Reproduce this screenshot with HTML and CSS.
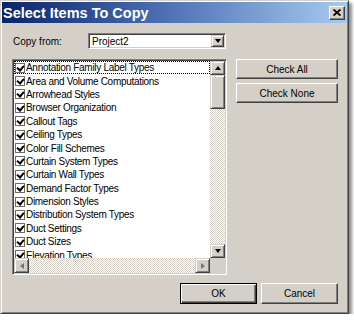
FILE: index.html
```html
<!DOCTYPE html>
<html>
<head>
<meta charset="UTF-8">
<title>Select Items To Copy</title>
<link rel="stylesheet" href="styles.css">
</head>
<body>
<div class="window">
  <div class="titlebar">
    <span class="title">Select Items To Copy</span>
    <span class="close"><svg width="8" height="7" viewBox="0 0 8 7"><path d="M0.5 0.5l7 6M7.5 0.5l-7 6" stroke="#000" stroke-width="1.8"/></svg></span>
  </div>
  <div class="content">
    <div class="source-row">
      <label class="source-label">Copy from:</label>
      <div class="combo">
        <span class="combo-value">Project2</span>
        <span class="sbtn combo-btn"><span class="tri tri-down"></span></span>
      </div>
    </div>
    <div class="main-row">
      <div class="listbox">
        <ul class="items">
          <li class="focused"><span class="check"></span>Annotation Family Label Types</li>
          <li><span class="check"></span>Area and Volume Computations</li>
          <li><span class="check"></span>Arrowhead Styles</li>
          <li><span class="check"></span>Browser Organization</li>
          <li><span class="check"></span>Callout Tags</li>
          <li><span class="check"></span>Ceiling Types</li>
          <li><span class="check"></span>Color Fill Schemes</li>
          <li><span class="check"></span>Curtain System Types</li>
          <li><span class="check"></span>Curtain Wall Types</li>
          <li><span class="check"></span>Demand Factor Types</li>
          <li><span class="check"></span>Dimension Styles</li>
          <li><span class="check"></span>Distribution System Types</li>
          <li><span class="check"></span>Duct Settings</li>
          <li><span class="check"></span>Duct Sizes</li>
          <li><span class="check"></span>Elevation Types</li>
        </ul>
        <div class="vscroll">
          <span class="sbtn"><span class="tri tri-up"></span></span>
          <span class="sbtn thumb"></span>
          <span class="track"></span>
          <span class="sbtn"><span class="tri tri-down"></span></span>
        </div>
        <div class="hscroll">
          <span class="sbtn"><span class="tri tri-left"></span></span>
          <span class="track"></span>
          <span class="sbtn"><span class="tri tri-right"></span></span>
        </div>
        <div class="corner"></div>
      </div>
      <div class="side-buttons">
        <button class="button">Check All</button>
        <button class="button">Check None</button>
      </div>
    </div>
    <div class="footer">
      <button class="button button-default">OK</button>
      <button class="button">Cancel</button>
    </div>
  </div>
</div>
</body>
</html>
```

FILE: styles.css
```css
*{box-sizing:border-box;}
body{margin:0;background:#fff;font-family:"Liberation Sans",Arial,sans-serif;font-size:10px;color:#000;}

.window{width:349px;height:314px;background:#d4d0c8;padding:1px;border:1px solid;border-color:#d4d0c8 #404040 #404040 #d4d0c8;box-shadow:inset 1px 1px #fff,inset -1px -1px #808080,3px 3px 3px rgba(0,0,0,.45);display:flex;flex-direction:column;}

.titlebar{height:21px;display:flex;align-items:center;justify-content:space-between;padding:0 2px 0 1px;background:linear-gradient(90deg,#0a246a 0%,#4a6db2 45%,#a6caf0 100%);}
.title{color:#fff;font-weight:bold;font-size:14.5px;}
.close{width:16px;height:14px;display:flex;align-items:center;justify-content:center;background:#d4d0c8;border:1px solid;border-color:#fff #404040 #404040 #fff;box-shadow:inset -1px -1px #808080;}

.content{padding:0 9px 0 10px;}
.source-row{display:flex;align-items:center;margin-top:10px;height:16px;}
.source-label{width:76px;padding-left:1px;}
.combo{width:138px;height:16px;display:flex;background:#fff;border:1px solid;border-color:#808080 #fff #fff #808080;box-shadow:inset 1px 1px #404040,inset -1px -1px #d4d0c8;padding:2px;}
.combo-value{flex:1;padding-left:1px;line-height:11px;}
.combo-btn{width:13px;margin:-1px -1px -1px 0;}

.main-row{display:flex;gap:9px;margin-top:10px;}
.listbox{width:215px;height:216px;background:#fff;border:1px solid;border-color:#808080 #fff #fff #808080;box-shadow:inset 1px 1px #404040,inset -1px -1px #d4d0c8;padding:1px;display:grid;grid-template-columns:1fr 15px;grid-template-rows:1fr 15px;}
.items{list-style:none;margin:0;padding:0;overflow:hidden;}
.items li{height:13.4px;display:flex;align-items:center;gap:1px;padding-left:1px;white-space:nowrap;letter-spacing:-0.3px;}
.items li.focused{outline:1px dotted #000;outline-offset:-1px;}
.check{width:10px;height:10px;flex:none;background:#fff;border:1px solid #6a6a6a;position:relative;}
.check::after{content:"";position:absolute;left:2px;top:0;width:3px;height:5px;border:solid #000;border-width:0 2px 2px 0;transform:rotate(40deg);}

.sbtn{display:flex;align-items:center;justify-content:center;background:#d4d0c8;border:1px solid;border-color:#d4d0c8 #404040 #404040 #d4d0c8;box-shadow:inset 1px 1px #fff,inset -1px -1px #808080;}
.track{flex:1;background:repeating-conic-gradient(#d4d0c8 0 25%,#fff 0 50%) 0 0/2px 2px;}
.vscroll{display:flex;flex-direction:column;}
.vscroll .sbtn{height:14px;}
.vscroll .thumb{height:34px;}
.hscroll{display:flex;}
.hscroll .sbtn{width:15px;}
.hscroll .tri{opacity:.45;}
.corner{background:#d4d0c8;}

.tri{width:0;height:0;border:solid transparent;}
.tri-up{border-width:0 3.5px 4px;border-bottom-color:#000;}
.tri-down{border-width:4px 3.5px 0;border-top-color:#000;}
.tri-left{border-width:3.5px 4px 3.5px 0;border-right-color:#000;}
.tri-right{border-width:3.5px 0 3.5px 4px;border-left-color:#000;}

.side-buttons{display:flex;flex-direction:column;gap:4px;}
.button{font-family:inherit;font-size:10px;color:#000;background:#d4d0c8;padding:0;border:1px solid;border-color:#fff #404040 #404040 #fff;box-shadow:inset -1px -1px #808080,inset 1px 1px #d4d0c8;}
.side-buttons .button{width:102px;height:20px;}
.footer{display:flex;justify-content:flex-end;gap:4px;margin-top:8px;}
.footer .button{width:77px;height:21px;}
.button-default{border-color:#000;box-shadow:inset 1px 1px #fff,inset -1px -1px #404040,inset -2px -2px #808080;}
```
